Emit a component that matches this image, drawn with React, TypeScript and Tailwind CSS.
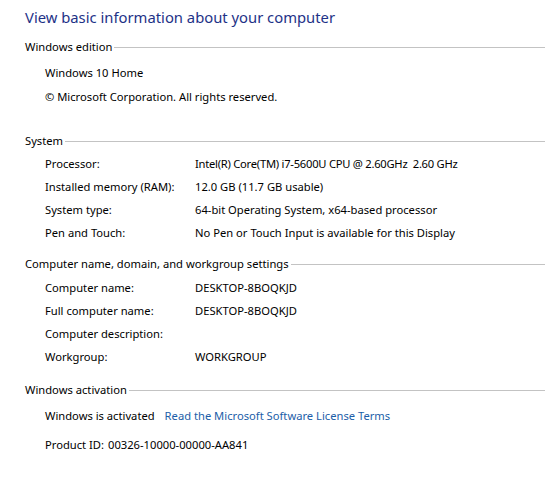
import React from "react";

const font = { fontFamily: '"Noto Sans", "Open Sans", sans-serif' };

function Header({ children, className = "" }: { children: React.ReactNode; className?: string }) {
  return (
    <div className={`flex items-center h-[20px] text-[11.2px] text-[#000] ${className}`}>
      <span className="whitespace-nowrap">{children}</span>
      <div className="flex-1 h-px bg-[#c3c3c3] ml-[2px] mr-[1px]" />
    </div>
  );
}

function Row({ label, value, valueClass = "" }: { label: string; value?: React.ReactNode; valueClass?: string }) {
  return (
    <div className="flex items-center h-[23px] pl-[20px] text-[11.2px] text-[#000]">
      <span className="w-[150px] whitespace-nowrap">{label}</span>
      <span className={`whitespace-pre ${valueClass}`}>{value}</span>
    </div>
  );
}

export default function App() {
  return (
    <div className="w-[546px] h-[479px] bg-white pl-[25px] overflow-hidden" style={font}>
      <div className="h-[35px] flex items-center text-[14.8px] text-[#1e3287]">
        View basic information about your computer
      </div>
      <Header className="mt-[2px]">Windows edition</Header>
      <div className="mt-[4px]">
        <div className="flex items-center h-[24px] pl-[20px] text-[11.2px]">Windows 10 Home</div>
        <div className="flex items-center h-[24px] pl-[20px] text-[11.2px]">© Microsoft Corporation. All rights reserved.</div>
      </div>
      <Header className="mt-[22px]">System</Header>
      <div className="mt-[2px]">
        <Row
          label="Processor:"
          value="Intel(R) Core(TM) i7-5600U CPU @ 2.60GHz  2.60 GHz"
          valueClass="tracking-[-0.25px]"
        />
        <Row label="Installed memory (RAM):" value="12.0 GB (11.7 GB usable)" />
        <Row label="System type:" value="64-bit Operating System, x64-based processor" />
        <Row label="Pen and Touch:" value="No Pen or Touch Input is available for this Display" />
      </div>
      <Header className="mt-[9px]">Computer name, domain, and workgroup settings</Header>
      <div className="mt-[3px]">
        <Row label="Computer name:" value="DESKTOP-8BOQKJD" />
        <Row label="Full computer name:" value="DESKTOP-8BOQKJD" />
        <Row label="Computer description:" value="" />
        <Row label="Workgroup:" value="WORKGROUP" />
      </div>
      <Header className="mt-[11px]">Windows activation</Header>
      <div className="mt-[4px]">
        <div className="flex items-center h-[24px] pl-[20px] text-[11.2px]">
          <span>Windows is activated</span>
          <span className="ml-[10px] text-[#1c5ea8]">Read the Microsoft Software License Terms</span>
        </div>
        <div className="flex items-center h-[24px] pl-[20px] text-[11.2px] mt-[5px]">
          <span>Product ID:</span>
          <span className="ml-[4px]">00326-10000-00000-AA841</span>
        </div>
      </div>
    </div>
  );
}
